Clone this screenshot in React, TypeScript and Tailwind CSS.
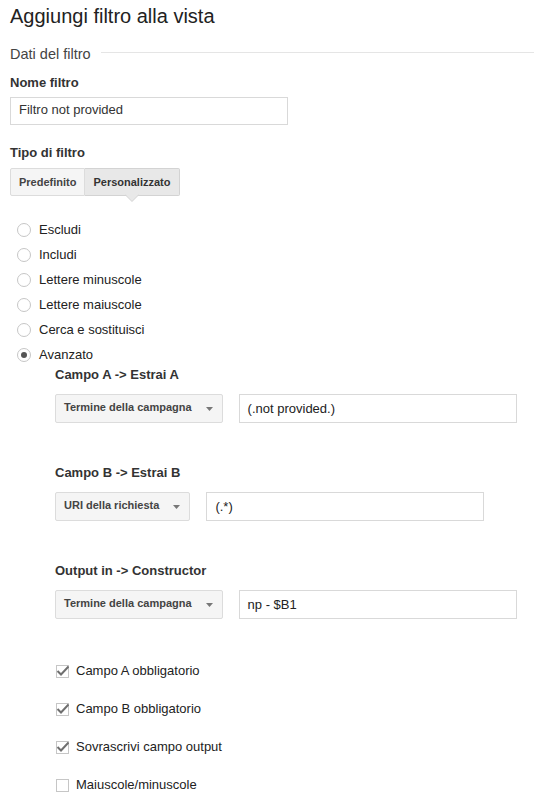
import React from "react";

const radios = [
  { label: "Escludi", checked: false },
  { label: "Includi", checked: false },
  { label: "Lettere minuscole", checked: false },
  { label: "Lettere maiuscole", checked: false },
  { label: "Cerca e sostituisci", checked: false },
  { label: "Avanzato", checked: true },
];

const checks = [
  { label: "Campo A obbligatorio", checked: true },
  { label: "Campo B obbligatorio", checked: true },
  { label: "Sovrascrivi campo output", checked: true },
  { label: "Maiuscole/minuscole", checked: false },
];

function Select({ value }: { value: string }) {
  return (
    <div className="flex h-[29px] items-center gap-[14px] rounded-[2px] border border-[#dcdcdc] bg-[#f5f5f5] pl-[8px] pr-[9px]">
      <span className="pb-[2px] text-[11px] font-bold leading-[25px] text-[#444]">{value}</span>
      <svg width="7" height="4" viewBox="0 0 7 4" className="mt-[1px]">
        <polygon points="0,0 7,0 3.5,4" fill="#777" />
      </svg>
    </div>
  );
}

function TextBox({ value }: { value: string }) {
  return (
    <div className="ml-[16px] h-[29px] w-[278px] border border-[#d9d9d9] bg-white px-[8px] text-[13px] leading-[27px] text-[#222]">
      {value}
    </div>
  );
}

function FieldRow({ label, select, value, first }: { label: string; select: string; value: string; first?: boolean }) {
  return (
    <div className={first ? "" : "mt-[42px]"}>
      <div className="text-[13px] font-bold leading-[16px] text-[#333]">{label}</div>
      <div className="mt-[11px] flex items-start">
        <Select value={select} />
        <TextBox value={value} />
      </div>
    </div>
  );
}

export default function App() {
  return (
    <div className="min-h-screen bg-white px-[10px] pb-[20px] font-['Liberation_Sans',Arial,sans-serif] text-[#222]">
      {/* Title */}
      <h1 className="pt-[4px] text-[20px] font-normal leading-[24px] text-[#222]">Aggiungi filtro alla vista</h1>

      {/* Section heading */}
      <div className="-mr-[10px] mt-[17px] flex items-start">
        <span className="text-[14.5px] leading-[18px] text-[#444]">Dati del filtro</span>
        <div className="ml-[10px] mt-[7px] h-px flex-1 bg-[#e5e5e5]" />
      </div>

      <div className="mt-[12px] text-[13px] font-bold leading-[16px] text-[#333]">Nome filtro</div>
      <div className="mt-[6px] h-[28px] w-[278px] border border-[#d9d9d9] px-[8px] text-[13px] leading-[24px] text-[#333]">
        Filtro not provided
      </div>

      <div className="mt-[20px] text-[13px] font-bold leading-[16px] text-[#333]">Tipo di filtro</div>
      <div className="mt-[7px] flex">
        <div className="rounded-l-[2px] border border-[#dcdcdc] bg-[#f5f5f5] px-[8px] text-[11px] font-bold leading-[26px] text-[#444]">
          Predefinito
        </div>
        <div className="relative rounded-r-[2px] border border-l-0 border-[#d3d3d3] bg-[#e8e8e8] pl-[8px] pr-[9px] text-[11px] font-bold leading-[26px] text-[#333]">
          Personalizzato
          <svg width="14" height="8" viewBox="0 0 14 8" className="absolute left-1/2 top-full -ml-[7px] -mt-px">
            <polygon points="0,0.5 14,0.5 7,7.5" fill="#e8e8e8" />
            <polyline points="0,0.5 7,7.5 14,0.5" fill="none" stroke="#d3d3d3" strokeWidth="1" />
          </svg>
        </div>
      </div>

      {/* Radio options */}
      <div className="ml-[7px] mt-[21px]">
        {radios.map((r) => (
          <div key={r.label} className="flex h-[25px] items-center gap-[8px]">
            <span className="flex h-[14px] w-[14px] items-center justify-center rounded-full border border-[#c6c6c6] bg-white">
              {r.checked && <span className="h-[6px] w-[6px] rounded-full bg-[#555]" />}
            </span>
            <span className="text-[13px] leading-[16px] text-[#222]">{r.label}</span>
          </div>
        ))}
      </div>

      {/* Advanced fields */}
      <div className="ml-[45px]">
        <FieldRow first label="Campo A -> Estrai A" select="Termine della campagna" value="(.not provided.)" />
        <FieldRow label="Campo B -> Estrai B" select="URI della richiesta" value="(.*)" />
        <FieldRow label="Output in -> Constructor" select="Termine della campagna" value="np - $B1" />

        <div className="mt-[44px] flex flex-col gap-[22px]">
          {checks.map((c) => (
            <div key={c.label} className="flex h-[16px] items-center">
              <span className="relative ml-px h-[13px] w-[13px] border border-[#c6c6c6] bg-white">
                {c.checked && (
                  <svg width="13" height="13" viewBox="0 0 13 13" className="absolute -left-px -top-px">
                    <polyline points="1.5,6 5,9.5 12.5,1.5" fill="none" stroke="#6f6f6f" strokeWidth="2" />
                  </svg>
                )}
              </span>
              <span className="ml-[7px] text-[13px] leading-[16px] text-[#222]">{c.label}</span>
            </div>
          ))}
        </div>
      </div>
    </div>
  );
}
